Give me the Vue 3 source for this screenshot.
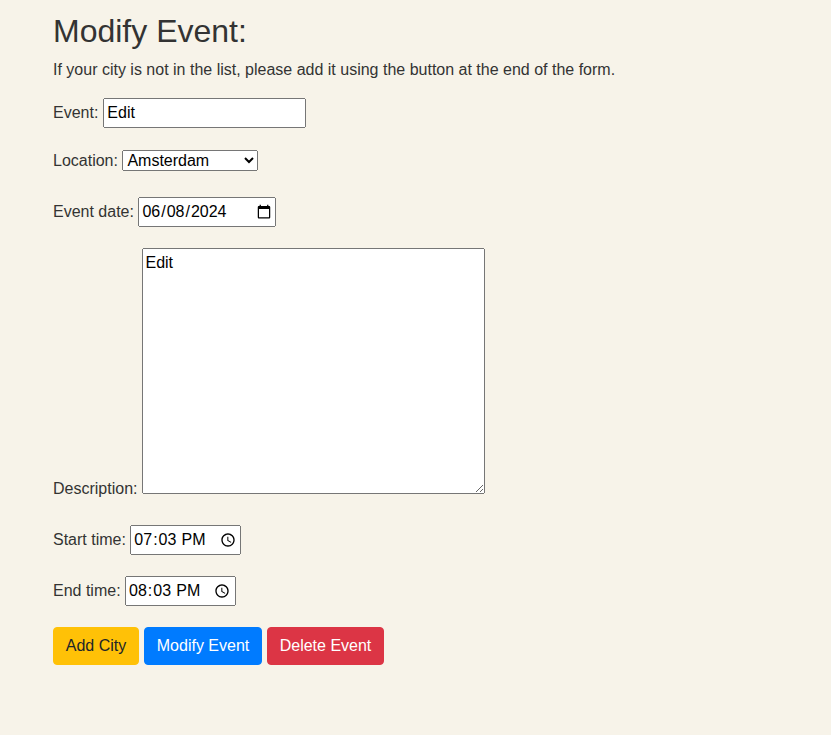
<script setup>
import { ref } from 'vue'
const name = ref('Edit')
const city = ref('Amsterdam')
const date = ref('2024-06-08')
const description = ref('Edit')
const start = ref('19:03')
const end = ref('20:03')
</script>

<template>
  <main class="page">
    <h2>Modify Event:</h2>
    <p class="hint">If your city is not in the list, please add it using the button at the end of the form.</p>
    <form @submit.prevent>
      <div class="row name-row"><label for="name">Event:</label><input id="name" v-model="name" class="name" type="text"></div>
      <div class="row city-row"><label for="city">Location:</label><select id="city" v-model="city"><option>Amsterdam</option></select></div>
      <div class="row date-row"><label for="date">Event date:</label><input id="date" v-model="date" class="date" type="date"></div>
      <div class="row desc-row"><label for="desc">Description:</label><textarea id="desc" v-model="description"></textarea></div>
      <div class="row start-row"><label for="start">Start time:</label><input id="start" v-model="start" class="time" type="time"></div>
      <div class="row end-row"><label for="end">End time:</label><input id="end" v-model="end" class="time" type="time"></div>
      <div class="actions">
        <button type="button" class="btn add">Add City</button>
        <button type="button" class="btn modify">Modify Event</button>
        <button type="button" class="btn delete">Delete Event</button>
      </div>
    </form>
  </main>
</template>

<style>
body { background: #f7f3e9; }
</style>
<style scoped>
* { box-sizing: border-box; }
.page { padding: 12px 53px 0; font: 16px/24px "Liberation Sans", Arial, sans-serif; color: #333; }
h2 { margin: 0 0 8px; font-size: 32px; line-height: 38px; font-weight: 400; }
.hint { margin: 0 0 16px; }
.row { display: flex; align-items: center; gap: 4.45px; }
input, select, textarea { margin: 0; font-family: inherit; font-size: 16px; line-height: 24px; color: #000; }
input { height: 30px; }
.name-row { gap: 5px; }
.name { width: 203px; }
.city-row { margin-top: 21px; align-items: flex-start; }
select { width: 136px; height: 21px; margin-top: 1px; line-height: normal; }
.date-row { margin-top: 24px; }
.date { width: 138px; }
.desc-row { margin-top: 21px; align-items: flex-end; gap: 5px; }
.desc-row label { margin-bottom: -7px; }
textarea { width: 343px; height: 246px; }
.start-row { margin-top: 31px; }
.time { width: 111px; word-spacing: 1px; }
.end-row { margin-top: 21px; }
.actions { display: flex; gap: 5px; margin-top: 21px; }
.btn { height: 38px; padding: 6px 0; border: 1px solid; border-radius: 4px; font: inherit; text-align: center; color: #fff; }
.add { width: 86px; background: #ffc107; border-color: #ffc107; color: #212529; }
.modify { width: 118px; background: #007bff; border-color: #007bff; }
.delete { width: 117px; background: #dc3545; border-color: #dc3545; }
</style>
